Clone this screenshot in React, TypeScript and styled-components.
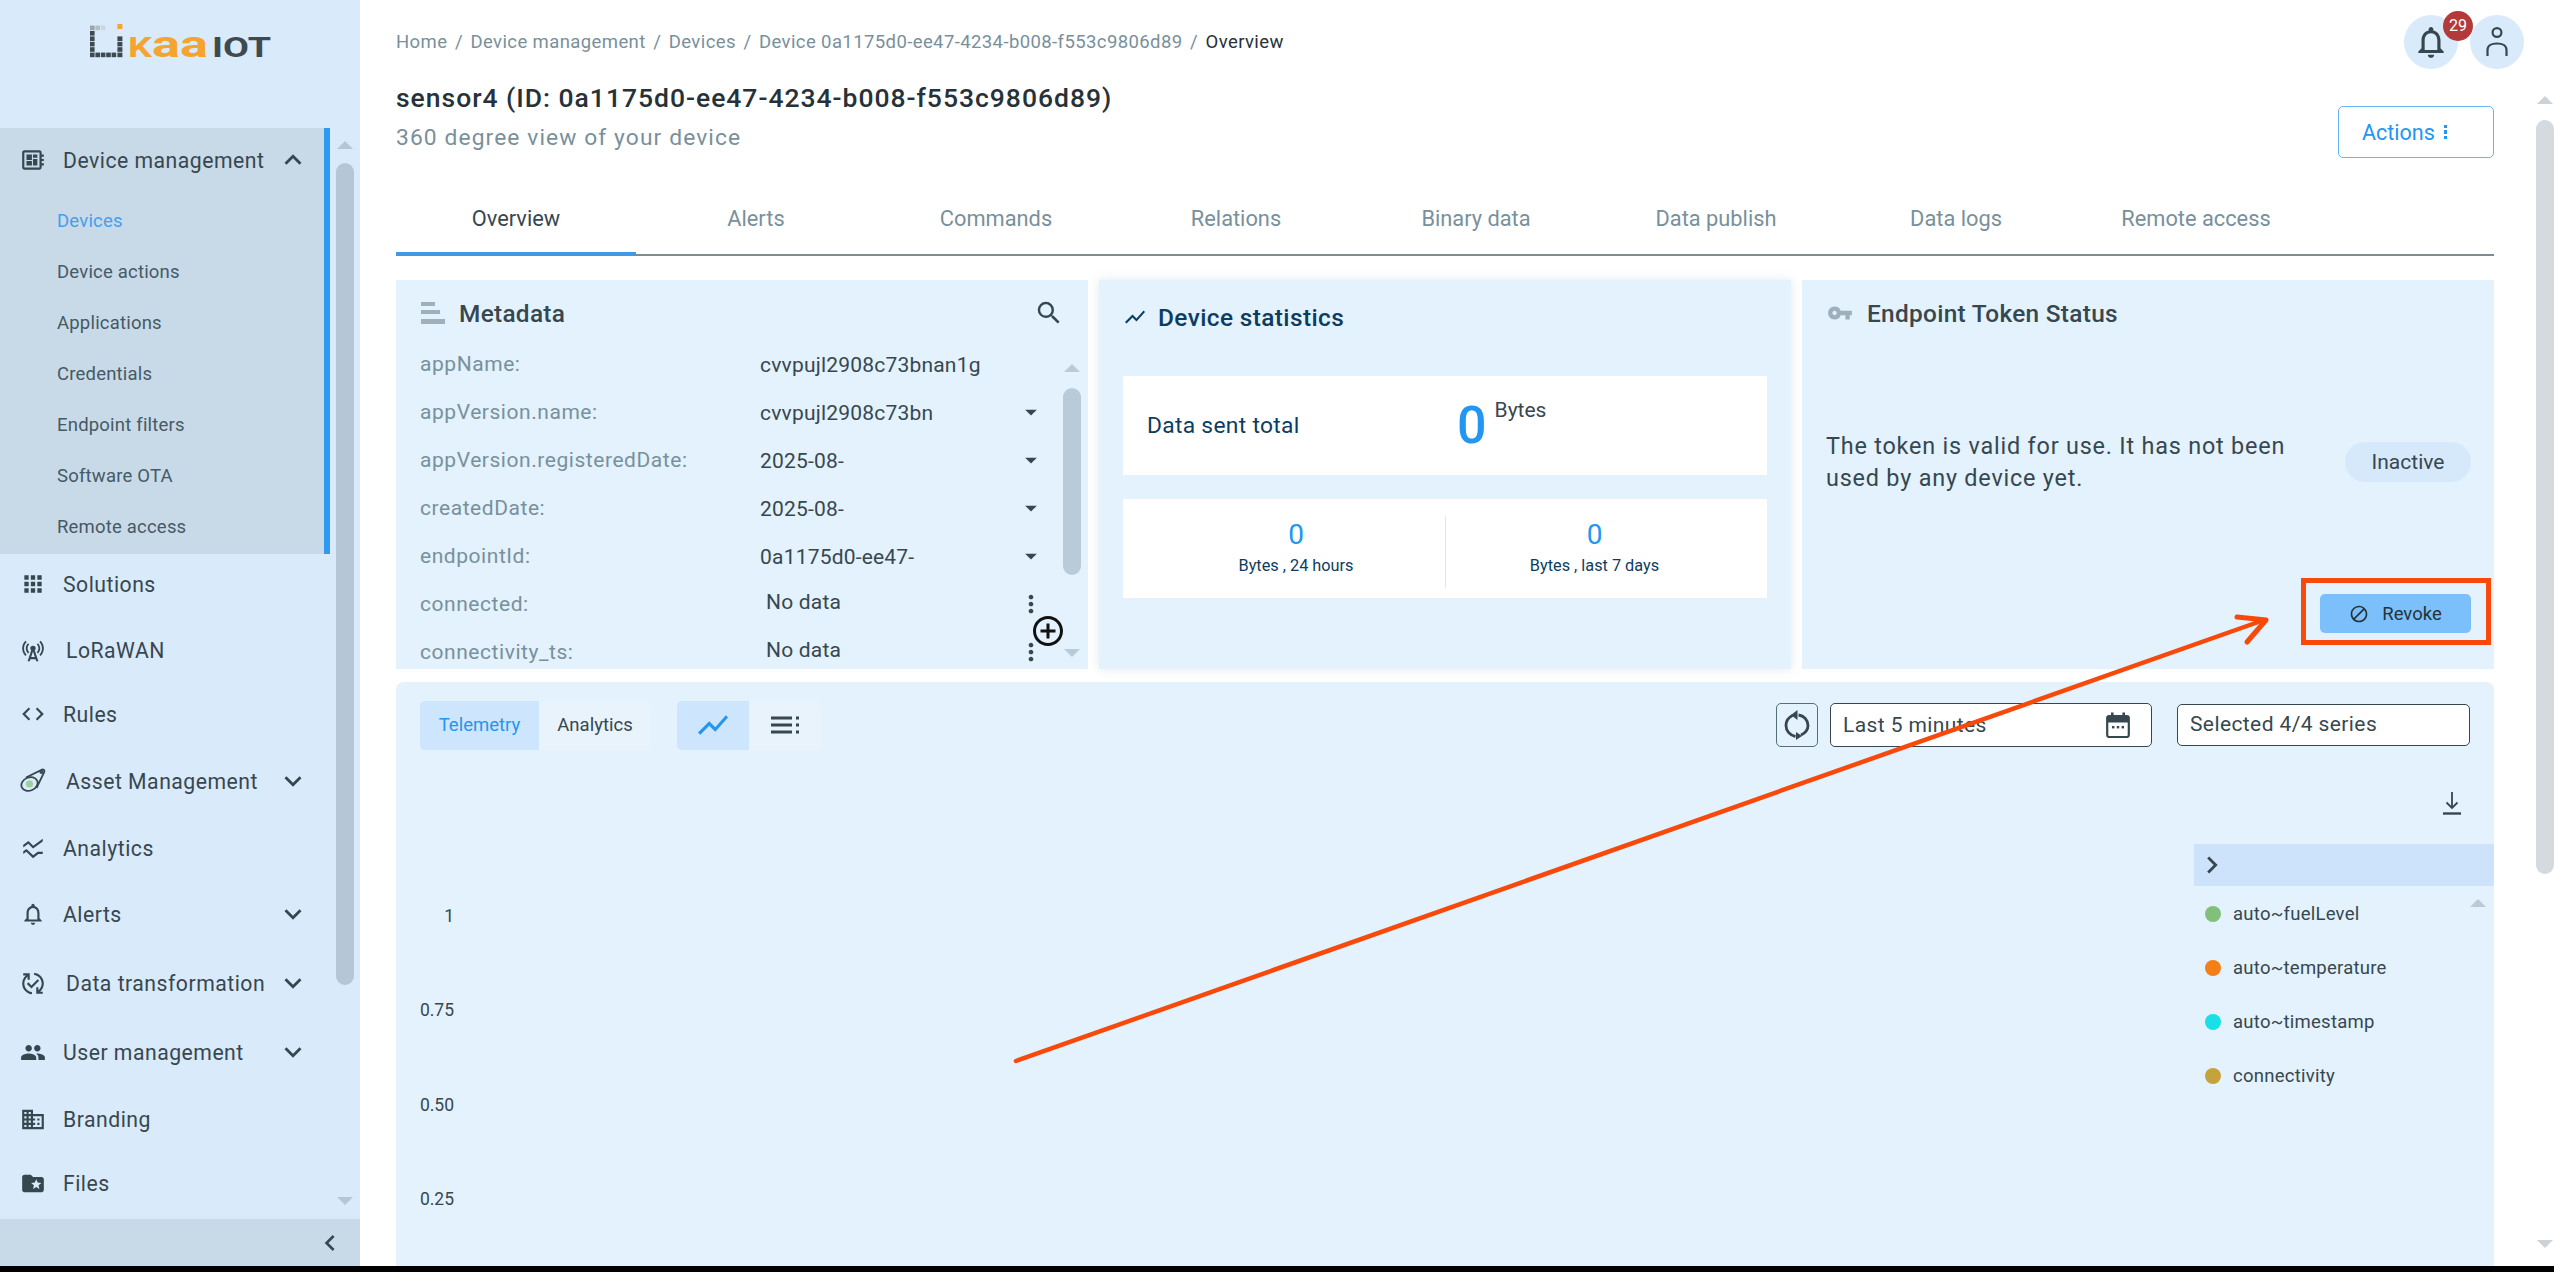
import React from "react";
import styled, { createGlobalStyle } from "styled-components";
import {
  MdApps,
  MdArrowDropDown,
  MdBlock,
  MdCellTower,
  MdChevronLeft,
  MdChevronRight,
  MdCode,
  MdDomain,
  MdExpandLess,
  MdExpandMore,
  MdFolderSpecial,
  MdMoreVert,
  MdNotificationsNone,
  MdOutlineAddCircleOutline,
  MdOutlineDeveloperBoard,
  MdOutlineNotifications,
  MdOutlinePublishedWithChanges,
  MdPeople,
  MdSearch,
  MdShowChart,
  MdSsidChart,
  MdVpnKey,
} from "react-icons/md";

const GlobalStyle = createGlobalStyle`
  html, body {
    margin: 0;
    padding: 0;
    background: #000;
    overflow: hidden;
  }
  body {
    font-family: Roboto, "Liberation Sans", sans-serif;
    color: #37474f;
  }
  * {
    box-sizing: border-box;
  }
`;

const KaaLogo = () => (
  <LogoSvg width="184" height="40" viewBox="0 0 184 40">
    {[1, 2, 3, 4, 5].map((row) => (
      <rect key={`l${row}`} x="1" y={3.6 + row * 5.4} width="4.6" height="4.6" fill="#3f4a50" />
    ))}
    {[1, 2, 3, 4].map((col) => (
      <rect key={`b${col}`} x={1 + col * 5.4} y="30.6" width="4.6" height="4.6" fill="#3f4a50" />
    ))}
    {[2, 3, 4, 5].map((row) => (
      <rect key={`r${row}`} x="28.4" y={3.6 + row * 5.4} width="5" height="4.6" fill="#3f4a50" />
    ))}
    <rect x="1" y="3.6" width="4.6" height="4.6" fill="#9aa4ab" />
    <rect x="6.4" y="3.6" width="4.6" height="4.6" fill="#b4bec6" />
    <rect x="11.8" y="3.6" width="4.6" height="4.6" fill="#cbd6df" />
    <rect x="28.4" y="2" width="5" height="5" fill="#f5a431" />
    <text x="39" y="35" fontFamily="Roboto" fontWeight="700" fontSize="27" fill="#f5a431" textLength="24" lengthAdjust="spacingAndGlyphs">
      K
    </text>
    <text x="63" y="35" fontFamily="Roboto" fontWeight="700" fontSize="36" fill="#f5a431" textLength="56" lengthAdjust="spacingAndGlyphs">
      aa
    </text>
    <text x="123" y="35" fontFamily="Roboto" fontWeight="700" fontSize="27" fill="#3f4a50" textLength="59" lengthAdjust="spacingAndGlyphs">
      IOT
    </text>
  </LogoSvg>
);

const AssetIcon = () => (
  <svg width="28" height="28" viewBox="0 0 26 26" fill="none" stroke="#37474f" strokeWidth="1.8">
    <ellipse cx="9.5" cy="16" rx="8.4" ry="6.6" transform="rotate(-24 9.5 16)" />
    <path d="M6 9.5 22 1.6c1.8-.4 3 1 2.2 2.6L16.5 20" />
    <circle cx="9.5" cy="16" r="3.6" fill="#9ad29a" stroke="none" />
    <circle cx="21.5" cy="4" r="1.2" />
  </svg>
);

const MetadataIcon = () => (
  <svg width="24" height="24" viewBox="0 0 24 24" fill="#9fb0bc">
    <rect x="0" y="1" width="14" height="4" />
    <rect x="0" y="9" width="19" height="4" />
    <rect x="0" y="18" width="24" height="5" />
  </svg>
);

const RefreshIcon = () => (
  <svg width="26" height="32" viewBox="0 0 26 32" fill="none" stroke="#37474f" strokeWidth="2.8">
    <path d="M8.5 6.5C4.5 8.5 2 12 2 16.5c0 5.5 4 10 9.5 11" />
    <path d="M17 26c4-2 7-5.6 7-9.6 0-5.4-4-9.6-9.5-10.4" />
    <path d="M13.5 1v10L7 6z" fill="#37474f" stroke="none" />
    <path d="M12 31v-8l6 4z" fill="#37474f" stroke="none" />
  </svg>
);

const CalendarIcon = () => (
  <svg width="24" height="26" viewBox="0 0 24 26" fill="none">
    <rect x="1.2" y="4" width="21.6" height="21" rx="2" stroke="#37474f" strokeWidth="2.2" />
    <rect x="1" y="4" width="22" height="6.5" fill="#37474f" />
    <rect x="5" y="0.5" width="2.6" height="5" fill="#37474f" />
    <rect x="16.4" y="0.5" width="2.6" height="5" fill="#37474f" />
    <rect x="6" y="14" width="2.4" height="2.4" fill="#37474f" />
    <rect x="10.8" y="14" width="2.4" height="2.4" fill="#37474f" />
    <rect x="15.6" y="14" width="2.4" height="2.4" fill="#37474f" />
  </svg>
);

const ListViewIcon = () => (
  <svg width="28" height="18" viewBox="0 0 28 18" fill="#37474f">
    <rect x="0" y="0.5" width="21" height="3" />
    <rect x="0" y="7.5" width="21" height="3" />
    <rect x="0" y="14.5" width="21" height="3" />
    <rect x="25" y="0.5" width="3" height="3" />
    <rect x="25" y="7.5" width="3" height="3" />
    <rect x="25" y="14.5" width="3" height="3" />
  </svg>
);

const UserIcon = () => (
  <svg width="24" height="32" viewBox="0 0 24 32" fill="none" stroke="#37474f" strokeWidth="2.2">
    <circle cx="12" cy="6.5" r="4.4" />
    <path d="M2.5 30v-6c0-4 3.6-6.5 9.5-6.5s9.5 2.5 9.5 6.5v6" />
  </svg>
);

const DownloadIcon = () => (
  <svg width="18" height="23" viewBox="0 0 18 23" fill="none" stroke="#37474f" strokeWidth="1.8">
    <path d="M9 0v16M3.5 10.5 9 16l5.5-5.5" />
    <path d="M0 21.5h18" strokeWidth="2.4" />
  </svg>
);

const AnnotationArrow = () => (
  <Annotation viewBox="0 0 2554 1272">
    <g fill="none" stroke="#f8480a" strokeLinecap="round">
      <rect x="2303.5" y="580.5" width="185" height="62" strokeWidth="5" strokeLinecap="butt" />
      <path d="M1016 1061 2264 620" strokeWidth="4.5" />
      <path d="M2237 617 2266 620 2247 642" strokeWidth="5" strokeLinejoin="round" />
    </g>
  </Annotation>
);

const navItems = [
  { label: "Solutions", icon: <MdApps size={30} />, h: 60 },
  { label: "LoRaWAN", icon: <MdCellTower size={33} />, h: 72, wide: true },
  { label: "Rules", icon: <MdCode size={30} />, h: 56 },
  { label: "Asset Management", icon: <AssetIcon />, h: 78, wide: true, more: true },
  { label: "Analytics", icon: <MdSsidChart size={31} />, h: 56 },
  { label: "Alerts", icon: <MdOutlineNotifications size={32} />, h: 76, more: true },
  { label: "Data transformation", icon: <MdOutlinePublishedWithChanges size={33} />, h: 62, wide: true, more: true },
  { label: "User management", icon: <MdPeople size={31} />, h: 76, more: true },
  { label: "Branding", icon: <MdDomain size={31} />, h: 58 },
  { label: "Files", icon: <MdFolderSpecial size={31} />, h: 70 },
];

const subItems = ["Devices", "Device actions", "Applications", "Credentials", "Endpoint filters", "Software OTA", "Remote access"];

const crumbs = ["Home", "Device management", "Devices", "Device 0a1175d0-ee47-4234-b008-f553c9806d89"];

const tabs = ["Overview", "Alerts", "Commands", "Relations", "Binary data", "Data publish", "Data logs", "Remote access"];

const metadata = [
  { key: "appName:", value: "cvvpujl2908c73bnan1g" },
  { key: "appVersion.name:", value: "cvvpujl2908c73bn", caret: true },
  { key: "appVersion.registeredDate:", value: "2025-08-", caret: true },
  { key: "createdDate:", value: "2025-08-", caret: true },
  { key: "endpointId:", value: "0a1175d0-ee47-", caret: true },
  { key: "connected:", value: "No data", empty: true },
  { key: "connectivity_ts:", value: "No data", empty: true },
];

const series = [
  { name: "auto~fuelLevel", color: "#81c07a" },
  { name: "auto~temperature", color: "#f57f17" },
  { name: "auto~timestamp", color: "#19e0e6" },
  { name: "connectivity", color: "#c6a33a" },
];

const yTicks = ["1", "0.75", "0.50", "0.25"];

export default function App() {
  return (
    <>
      <GlobalStyle />
      <Page>
        <Shell>
          <Sidebar>
            <LogoArea>
              <KaaLogo />
            </LogoArea>
            <SidebarScroll>
              <NavList>
                <NavGroup>
                  <NavRow $h={64}>
                    <NavIcon>
                      <MdOutlineDeveloperBoard size={32} />
                    </NavIcon>
                    <NavLabel>Device management</NavLabel>
                    <MdExpandLess size={34} />
                  </NavRow>
                  <SubList>
                    {subItems.map((item, i) => (
                      <SubItem key={item} $active={i === 0}>
                        {item}
                      </SubItem>
                    ))}
                  </SubList>
                </NavGroup>
                {navItems.map((item) => (
                  <NavRow key={item.label} $h={item.h}>
                    <NavIcon>{item.icon}</NavIcon>
                    <NavLabel $wide={item.wide}>{item.label}</NavLabel>
                    {item.more && <MdExpandMore size={34} />}
                  </NavRow>
                ))}
              </NavList>
              <ScrollTrack $top={13} $bottom={14} $gap={6}>
                <ScrollArrow $color="#b5c7d6" />
                <ScrollThumb $height={822} $margin={14} $color="#b5c7d6" />
                <ScrollArrow $down $color="#b5c7d6" $pushed />
              </ScrollTrack>
            </SidebarScroll>
            <CollapseBar>
              <MdChevronLeft size={32} />
            </CollapseBar>
          </Sidebar>

          <Main>
            <Content>
              <TopBar>
                <Breadcrumbs>
                  {crumbs.map((crumb) => (
                    <React.Fragment key={crumb}>
                      <span>{crumb}</span>
                      <CrumbSlash>/</CrumbSlash>
                    </React.Fragment>
                  ))}
                  <CrumbCurrent>Overview</CrumbCurrent>
                </Breadcrumbs>
                <TopActions>
                  <RoundButton>
                    <MdNotificationsNone size={38} />
                    <Badge>29</Badge>
                  </RoundButton>
                  <RoundButton>
                    <UserIcon />
                  </RoundButton>
                </TopActions>
              </TopBar>

              <TitleRow>
                <div>
                  <Title>sensor4 (ID: 0a1175d0-ee47-4234-b008-f553c9806d89)</Title>
                  <Subtitle>360 degree view of your device</Subtitle>
                </div>
                <ActionsButton>
                  Actions
                  <ActionDots>
                    <i />
                    <i />
                    <i />
                  </ActionDots>
                </ActionsButton>
              </TitleRow>

              <TabBar>
                {tabs.map((tab, i) => (
                  <Tab key={tab} $active={i === 0}>
                    {tab}
                  </Tab>
                ))}
              </TabBar>

              <CardGrid>
                <Card>
                  <CardHeader>
                    <MetadataIcon />
                    <CardTitle>Metadata</CardTitle>
                    <SearchSlot>
                      <MdSearch size={30} />
                    </SearchSlot>
                  </CardHeader>
                  <MetaBody>
                    <MetaList>
                      {metadata.map((row) => (
                        <MetaRow key={row.key}>
                          <MetaKey>{row.key}</MetaKey>
                          <MetaValue $empty={row.empty}>{row.value}</MetaValue>
                          <MetaControl>
                            {row.caret && <MdArrowDropDown size={30} />}
                            {row.empty && <MdMoreVert size={30} />}
                          </MetaControl>
                        </MetaRow>
                      ))}
                    </MetaList>
                    <ScrollTrack $top={24} $bottom={12} $gap={0} $right={7}>
                      <ScrollArrow $color="#b9cad8" />
                      <ScrollThumb $height={187} $margin={16} $color="#b9cad8" />
                      <ScrollArrow $down $color="#b9cad8" $pushed />
                    </ScrollTrack>
                  </MetaBody>
                  <AddButton>
                    <MdOutlineAddCircleOutline size={36} />
                  </AddButton>
                </Card>

                <StatsCard>
                  <StatsHeader>
                    <MdShowChart size={24} />
                    <StatsTitle>Device statistics</StatsTitle>
                  </StatsHeader>
                  <StatTotal>
                    <StatTotalLabel>Data sent total</StatTotalLabel>
                    <BigZero>0</BigZero>
                    <StatUnit>Bytes</StatUnit>
                  </StatTotal>
                  <StatSplit>
                    <StatColumn>
                      <SmallZero>0</SmallZero>
                      <StatCaption>Bytes , 24 hours</StatCaption>
                    </StatColumn>
                    <StatColumn $divided>
                      <SmallZero>0</SmallZero>
                      <StatCaption>Bytes , last 7 days</StatCaption>
                    </StatColumn>
                  </StatSplit>
                </StatsCard>

                <Card>
                  <CardHeader>
                    <KeyIcon>
                      <MdVpnKey size={26} />
                    </KeyIcon>
                    <CardTitle>Endpoint Token Status</CardTitle>
                  </CardHeader>
                  <TokenBody>
                    <TokenText>The token is valid for use. It has not been used by any device yet.</TokenText>
                    <StatusPill>Inactive</StatusPill>
                  </TokenBody>
                  <TokenFooter>
                    <RevokeButton>
                      <MdBlock size={20} />
                      Revoke
                    </RevokeButton>
                  </TokenFooter>
                </Card>
              </CardGrid>

              <ChartPanel>
                <ChartToolbar>
                  <Segmented>
                    <SegmentText $active>Telemetry</SegmentText>
                    <SegmentText>Analytics</SegmentText>
                  </Segmented>
                  <Segmented>
                    <SegmentIcon $active>
                      <MdShowChart size={36} />
                    </SegmentIcon>
                    <SegmentIcon>
                      <ListViewIcon />
                    </SegmentIcon>
                  </Segmented>
                  <ToolbarRight>
                    <RefreshButton>
                      <RefreshIcon />
                    </RefreshButton>
                    <DateField>
                      Last 5 minutes
                      <CalendarIcon />
                    </DateField>
                    <SeriesField>Selected 4/4 series</SeriesField>
                  </ToolbarRight>
                </ChartToolbar>
                <ChartBody>
                  <YAxis>
                    {yTicks.map((tick) => (
                      <YTick key={tick}>{tick}</YTick>
                    ))}
                  </YAxis>
                  <LegendColumn>
                    <DownloadRow>
                      <DownloadIcon />
                    </DownloadRow>
                    <LegendHeader>
                      <MdChevronRight size={34} />
                    </LegendHeader>
                    <LegendBody>
                      <LegendList>
                        {series.map((item) => (
                          <LegendItem key={item.name}>
                            <LegendDot $color={item.color} />
                            {item.name}
                          </LegendItem>
                        ))}
                      </LegendList>
                      <LegendTrack>
                        <ScrollArrow $color="#b9cad8" />
                      </LegendTrack>
                    </LegendBody>
                  </LegendColumn>
                </ChartBody>
              </ChartPanel>
            </Content>
            <ScrollTrack $top={96} $bottom={18} $gap={0}>
              <ScrollArrow $color="#ccd2d6" />
              <ScrollThumb $height={754} $margin={16} $color="#d5dade" />
              <ScrollArrow $down $color="#ccd2d6" $pushed />
            </ScrollTrack>
          </Main>
        </Shell>
        <AnnotationArrow />
      </Page>
    </>
  );
}

const Page = styled.div`
  position: relative;
  width: 2554px;
  height: 1272px;
  background: #000;
  overflow: hidden;
`;

const Shell = styled.div`
  display: flex;
  height: 1266px;
  background: #fff;
`;

const Sidebar = styled.aside`
  display: flex;
  flex-direction: column;
  width: 360px;
  flex-shrink: 0;
  background: #d9eafb;
`;

const LogoArea = styled.div`
  height: 128px;
  padding: 22px 0 0 89px;
  flex-shrink: 0;
`;

const LogoSvg = styled.svg`
  display: block;
  overflow: visible;
`;

const SidebarScroll = styled.div`
  display: flex;
  flex: 1;
  min-height: 0;
`;

const NavList = styled.nav`
  width: 330px;
  flex-shrink: 0;
`;

const NavGroup = styled.div`
  height: 426px;
  background: #c8d9e8;
  box-shadow: inset -6px 0 0 #2e9bf0;
`;

const NavRow = styled.div<{ $h: number }>`
  display: flex;
  align-items: center;
  height: ${(p) => p.$h}px;
  padding: 0 20px;
  color: #37474f;
`;

const NavIcon = styled.span`
  display: flex;
  align-items: center;
  justify-content: center;
  width: 26px;
  flex-shrink: 0;
`;

const NavLabel = styled.span<{ $wide?: boolean }>`
  flex: 1;
  margin-left: ${(p) => (p.$wide ? 20 : 17)}px;
  font-size: 21.2px;
  letter-spacing: 0.5px;
  white-space: nowrap;
`;

const SubList = styled.div`
  padding-top: 3px;
`;

const SubItem = styled.div<{ $active?: boolean }>`
  display: flex;
  align-items: center;
  height: 51px;
  padding-left: 57px;
  font-size: 18.5px;
  letter-spacing: 0.2px;
  color: ${(p) => (p.$active ? "#42a0ec" : "#455a64")};
`;

const ScrollTrack = styled.div<{ $top: number; $bottom: number; $gap: number; $right?: number }>`
  display: flex;
  flex-direction: column;
  align-items: center;
  width: 18px;
  flex-shrink: 0;
  margin-left: ${(p) => p.$gap}px;
  margin-right: ${(p) => p.$right ?? 0}px;
  padding: ${(p) => p.$top}px 0 ${(p) => p.$bottom}px;
`;

const ScrollArrow = styled.div<{ $down?: boolean; $color: string; $pushed?: boolean }>`
  width: 0;
  height: 0;
  flex-shrink: 0;
  margin-top: ${(p) => (p.$pushed ? "auto" : 0)};
  border-left: 8px solid transparent;
  border-right: 8px solid transparent;
  ${(p) => (p.$down ? `border-top: 8px solid ${p.$color};` : `border-bottom: 8px solid ${p.$color};`)}
`;

const ScrollThumb = styled.div<{ $height: number; $margin: number; $color: string }>`
  width: 18px;
  height: ${(p) => p.$height}px;
  margin-top: ${(p) => p.$margin}px;
  border-radius: 9px;
  background: ${(p) => p.$color};
`;

const CollapseBar = styled.div`
  display: flex;
  align-items: center;
  justify-content: flex-end;
  height: 47px;
  flex-shrink: 0;
  padding-right: 14px;
  background: #c8d9e8;
  color: #37474f;
`;

const Main = styled.main`
  display: flex;
  flex: 1;
  min-width: 0;
`;

const Content = styled.div`
  display: flex;
  flex-direction: column;
  flex: 1;
  min-width: 0;
  padding: 15px 42px 0 36px;
`;

const TopBar = styled.div`
  display: flex;
  align-items: center;
  justify-content: space-between;
  height: 53px;
  margin-right: -30px;
  flex-shrink: 0;
`;

const Breadcrumbs = styled.div`
  display: flex;
  align-items: center;
  font-size: 18.5px;
  letter-spacing: 0.4px;
  color: #78909c;
`;

const CrumbSlash = styled.span`
  margin: 0 7.5px;
`;

const CrumbCurrent = styled.span`
  color: #263238;
`;

const TopActions = styled.div`
  display: flex;
  gap: 12px;
`;

const RoundButton = styled.div`
  position: relative;
  display: flex;
  align-items: center;
  justify-content: center;
  width: 54px;
  height: 54px;
  border-radius: 50%;
  background: #d9eafb;
  color: #37474f;
`;

const Badge = styled.span`
  position: absolute;
  top: -4px;
  right: -15px;
  display: flex;
  align-items: center;
  justify-content: center;
  width: 30px;
  height: 30px;
  border-radius: 50%;
  background: #b23a3a;
  color: #fff;
  font-size: 16px;
`;

const TitleRow = styled.div`
  display: flex;
  justify-content: space-between;
  padding-top: 10px;
  height: 89px;
  flex-shrink: 0;
`;

const Title = styled.h1`
  margin: 0;
  font-size: 26.5px;
  line-height: 40px;
  font-weight: 500;
  letter-spacing: 0.98px;
  color: #263238;
`;

const Subtitle = styled.div`
  font-size: 22.8px;
  line-height: 40px;
  letter-spacing: 1.1px;
  color: #78909c;
`;

const ActionsButton = styled.div`
  display: flex;
  align-items: center;
  gap: 9px;
  width: 156px;
  height: 52px;
  margin-top: 28px;
  padding-left: 23px;
  border: 1.5px solid #64b5f6;
  border-radius: 5px;
  font-size: 21.5px;
  color: #2196f3;
`;

const ActionDots = styled.span`
  display: flex;
  flex-direction: column;
  gap: 2px;
  i {
    width: 3px;
    height: 3.5px;
    background: #2196f3;
  }
`;

const TabBar = styled.div`
  display: flex;
  height: 75px;
  margin-top: 24px;
  flex-shrink: 0;
  box-shadow: inset 0 -2px 0 #7d8b92;
`;

const Tab = styled.div<{ $active?: boolean }>`
  display: flex;
  align-items: center;
  justify-content: center;
  width: 240px;
  font-size: 21.8px;
  color: ${(p) => (p.$active ? "#37474f" : "#78909c")};
  box-shadow: ${(p) => (p.$active ? "inset 0 -4px 0 #4299e1" : "none")};
`;

const CardGrid = styled.div`
  display: grid;
  grid-template-columns: repeat(3, 1fr);
  gap: 11px;
  height: 389px;
  margin-top: 24px;
  flex-shrink: 0;
`;

const Card = styled.section`
  position: relative;
  display: flex;
  flex-direction: column;
  min-width: 0;
  overflow: hidden;
  background: #e3f2fd;
`;

const CardHeader = styled.header`
  display: flex;
  align-items: center;
  gap: 14px;
  height: 66px;
  flex-shrink: 0;
  padding: 0 24px 0 25px;
`;

const CardTitle = styled.h2`
  margin: 0;
  font-size: 24.4px;
  font-weight: 500;
  letter-spacing: 0.3px;
  color: #37474f;
`;

const SearchSlot = styled.span`
  display: flex;
  margin-left: auto;
  color: #37474f;
`;

const KeyIcon = styled.span`
  display: flex;
  color: #9fb0bc;
`;

const MetaBody = styled.div`
  display: flex;
  flex: 1;
  min-height: 0;
  margin-top: -6px;
`;

const MetaList = styled.div`
  flex: 1;
  min-width: 0;
  padding-left: 24px;
`;

const MetaRow = styled.div`
  display: flex;
  align-items: center;
  height: 48px;
  padding-right: 18px;
  font-size: 21px;
`;

const MetaKey = styled.span`
  width: 340px;
  flex-shrink: 0;
  letter-spacing: 0.55px;
  color: #78909c;
`;

const MetaValue = styled.span<{ $empty?: boolean }>`
  flex: 1;
  padding-left: ${(p) => (p.$empty ? 6 : 0)}px;
  margin-top: ${(p) => (p.$empty ? -4 : 2)}px;
  letter-spacing: 0.2px;
  color: #37474f;
`;

const MetaControl = styled.span`
  display: flex;
  justify-content: center;
  width: 28px;
  color: #37474f;
`;

const AddButton = styled.span`
  position: absolute;
  left: 634px;
  top: 333px;
  display: flex;
  border-radius: 50%;
  color: #111;
`;

const StatsCard = styled(Card)`
  overflow: visible;
  padding: 0 24px;
  box-shadow: 0 0 10px rgba(100, 130, 160, 0.18);
`;

const StatsHeader = styled.header`
  display: flex;
  align-items: center;
  gap: 11px;
  height: 74px;
  margin-bottom: 22px;
  color: #0d3c61;
`;

const StatsTitle = styled.h2`
  margin: 0;
  font-size: 24.4px;
  font-weight: 500;
  letter-spacing: 0.4px;
  color: #0d3c61;
`;

const StatTotal = styled.div`
  display: flex;
  align-items: center;
  height: 99px;
  padding-left: 24px;
  background: #fff;
`;

const StatTotalLabel = styled.span`
  width: 310px;
  font-size: 22.8px;
  letter-spacing: 0.3px;
  color: #0d3c61;
`;

const BigZero = styled.span`
  font-size: 52px;
  font-weight: 500;
  line-height: 1;
  color: #2196f3;
`;

const StatUnit = styled.span`
  align-self: flex-start;
  margin: 22px 0 0 8px;
  font-size: 21px;
  color: #37474f;
`;

const StatSplit = styled.div`
  display: grid;
  grid-template-columns: 1fr 1fr;
  height: 99px;
  margin-top: 24px;
  padding: 17px 24px 10px;
  background: #fff;
`;

const StatColumn = styled.div<{ $divided?: boolean }>`
  display: flex;
  flex-direction: column;
  align-items: center;
  border-left: ${(p) => (p.$divided ? "1px solid #dfe5ea" : "none")};
`;

const SmallZero = styled.span`
  font-size: 28px;
  line-height: 38px;
  color: #2196f3;
`;

const StatCaption = styled.span`
  font-size: 16.3px;
  line-height: 24px;
  color: #0d3c61;
`;

const TokenBody = styled.div`
  display: flex;
  align-items: center;
  justify-content: space-between;
  flex: 1;
  padding: 0 23px 0 24px;
`;

const TokenText = styled.p`
  width: 490px;
  margin: 0;
  font-size: 23.4px;
  line-height: 32px;
  letter-spacing: 0.8px;
  color: #37474f;
`;

const StatusPill = styled.span`
  display: flex;
  align-items: center;
  justify-content: center;
  width: 126px;
  height: 40px;
  border-radius: 20px;
  background: #d6e9fb;
  font-size: 21px;
  color: #37474f;
`;

const TokenFooter = styled.div`
  display: flex;
  justify-content: flex-end;
  height: 91px;
  flex-shrink: 0;
  padding: 16px 23px 0 0;
`;

const RevokeButton = styled.div`
  display: flex;
  align-items: center;
  justify-content: center;
  gap: 13px;
  width: 151px;
  height: 39px;
  border-radius: 5px;
  background: #7cc0fb;
  font-size: 18.5px;
  color: #263238;
`;

const ChartPanel = styled.section`
  display: flex;
  flex-direction: column;
  flex: 1;
  min-height: 0;
  margin-top: 13px;
  border-radius: 8px 8px 0 0;
  background: #e3f2fd;
`;

const ChartToolbar = styled.div`
  display: flex;
  align-items: center;
  gap: 26px;
  height: 86px;
  flex-shrink: 0;
  padding: 0 24px;
`;

const Segmented = styled.div`
  display: flex;
  height: 49px;
  border-radius: 5px;
  overflow: hidden;
  background: #e9f3fb;
`;

const SegmentText = styled.span<{ $active?: boolean }>`
  display: flex;
  align-items: center;
  justify-content: center;
  width: ${(p) => (p.$active ? 119 : 112)}px;
  font-size: 18.5px;
  background: ${(p) => (p.$active ? "#cde6fd" : "transparent")};
  color: ${(p) => (p.$active ? "#2196f3" : "#37474f")};
`;

const SegmentIcon = styled.span<{ $active?: boolean }>`
  display: flex;
  align-items: center;
  justify-content: center;
  width: 72px;
  background: ${(p) => (p.$active ? "#cde6fd" : "transparent")};
  color: #2196f3;
`;

const ToolbarRight = styled.div`
  display: flex;
  align-items: center;
  margin-left: auto;
`;

const RefreshButton = styled.div`
  display: flex;
  align-items: center;
  justify-content: center;
  width: 42px;
  height: 44px;
  border: 1.5px solid #546e7a;
  border-radius: 5px;
`;

const DateField = styled.div`
  display: flex;
  align-items: center;
  justify-content: space-between;
  width: 322px;
  height: 44px;
  margin: 0 25px 0 12px;
  padding: 0 21px 0 12px;
  border: 1.5px solid #37474f;
  border-radius: 5px;
  background: #fff;
  font-size: 21px;
  letter-spacing: 0.4px;
  color: #37474f;
`;

const SeriesField = styled.div`
  display: flex;
  align-items: center;
  width: 293px;
  height: 42px;
  padding: 0 12px 3px;
  border: 1.5px solid #37474f;
  border-radius: 5px;
  background: #fff;
  font-size: 21px;
  letter-spacing: 0.4px;
  color: #37474f;
`;

const ChartBody = styled.div`
  display: flex;
  flex: 1;
  min-height: 0;
  overflow: hidden;
`;

const YAxis = styled.div`
  width: 58px;
  padding-top: 101px;
`;

const YTick = styled.div`
  display: flex;
  align-items: center;
  justify-content: flex-end;
  height: 94.3px;
  font-size: 17.5px;
  color: #37474f;
`;

const LegendColumn = styled.div`
  display: flex;
  flex-direction: column;
  width: 300px;
  margin-left: auto;
`;

const DownloadRow = styled.div`
  display: flex;
  justify-content: flex-end;
  height: 76px;
  padding: 24px 33px 0 0;
`;

const LegendHeader = styled.div`
  display: flex;
  align-items: center;
  height: 42px;
  padding-left: 1px;
  background: #cde3fb;
  color: #37474f;
`;

const LegendBody = styled.div`
  display: flex;
`;

const LegendList = styled.div`
  flex: 1;
  padding-top: 1px;
`;

const LegendItem = styled.div`
  display: flex;
  align-items: center;
  gap: 12px;
  height: 54px;
  padding-left: 11px;
  font-size: 18.5px;
  letter-spacing: 0.25px;
  color: #37474f;
`;

const LegendDot = styled.span<{ $color: string }>`
  width: 16px;
  height: 16px;
  border-radius: 50%;
  background: ${(p) => p.$color};
`;

const LegendTrack = styled.div`
  display: flex;
  justify-content: center;
  width: 18px;
  margin-right: 7px;
  padding-top: 13px;
`;

const Annotation = styled.svg`
  position: absolute;
  inset: 0;
  width: 2554px;
  height: 1272px;
  pointer-events: none;
`;
